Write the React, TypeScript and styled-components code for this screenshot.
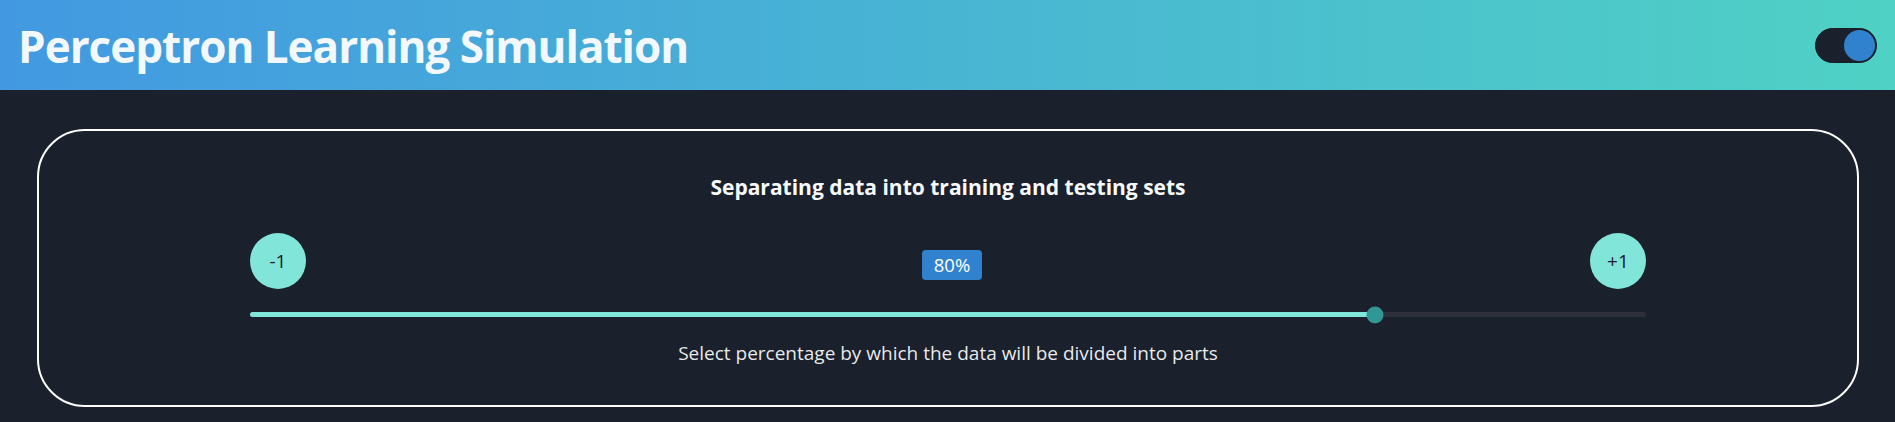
import React, { useState } from "react";
import styled, { createGlobalStyle } from "styled-components";

const GlobalStyle = createGlobalStyle`
  body {
    margin: 0;
    background-color: #1a202c;
    font-family: "Open Sans", "Noto Sans", sans-serif;
    color: rgba(255, 255, 255, 0.92);
  }
`;

const Header = styled.header`
  height: 90px;
  display: flex;
  align-items: center;
  justify-content: space-between;
  padding: 0 18px 0 18px;
  background: linear-gradient(to right, #4299e1, #4fd1c5);
`;
const Title = styled.h1`
  margin: 2px 0 0;
  font-size: 44px;
  font-weight: 700;
  letter-spacing: -1px;
  color: #f3f8fc;
  line-height: 1.2;
`;
const Switch = styled.button<{ $on: boolean }>`
  width: 62px;
  height: 35px;
  border-radius: 18px;
  border: 1px solid #171c26;
  background-color: #1a202c;
  padding: 1px;
  display: flex;
  justify-content: ${(p) => (p.$on ? "flex-end" : "flex-start")};
  align-items: center;
  cursor: pointer;
  span {
    width: 31px;
    height: 31px;
    border-radius: 50%;
    background-color: #3182ce;
  }
`;

const Card = styled.section`
  margin: 39px 36px 0 37px;
  height: 274px;
  border: 2px solid #ffffff;
  border-radius: 48px;
  padding: 0 211px;
  display: flex;
  flex-direction: column;
  align-items: stretch;
`;
const CardTitle = styled.h2`
  margin: 43px 0 0;
  text-align: center;
  font-size: 21px;
  font-weight: 700;
  line-height: 26px;
  color: #f7fafc;
`;
const Controls = styled.div`
  display: flex;
  align-items: center;
  justify-content: space-between;
  margin-top: 33px;
`;
const StepButton = styled.button`
  width: 56px;
  height: 56px;
  border-radius: 50%;
  border: none;
  background-color: #81e6d9;
  color: #1a202c;
  font-family: inherit;
  font-size: 19px;
  cursor: pointer;
`;
const ValueLabel = styled.div`
  margin: 7px 0 0 8px;
  padding: 0 12px;
  height: 30px;
  line-height: 30px;
  border-radius: 4px;
  background-color: #3182ce;
  color: #ffffff;
  font-size: 18.5px;
`;
const Track = styled.div`
  position: relative;
  margin-top: 23px;
  height: 5px;
  border-radius: 3px;
  background-color: #2d303b;
`;
const Filled = styled.div`
  height: 100%;
  border-radius: 3px;
  background-color: #81e6d9;
`;
const Thumb = styled.div`
  position: absolute;
  top: 50%;
  width: 17px;
  height: 17px;
  border-radius: 50%;
  background-color: #319795;
  transform: translate(-50%, -50%);
`;
const Hint = styled.p`
  margin: 23px 0 0;
  text-align: center;
  font-size: 19px;
`;

const App = () => {
  const [value, setValue] = useState(80);
  const [dark, setDark] = useState(true);
  const pos = `calc(${value}% + 8px)`;

  return (
    <>
      <GlobalStyle />
      <Header>
        <Title>Perceptron Learning Simulation</Title>
        <Switch $on={dark} onClick={() => setDark(!dark)}>
          <span />
        </Switch>
      </Header>
      <Card>
        <CardTitle>Separating data into training and testing sets</CardTitle>
        <Controls>
          <StepButton onClick={() => setValue(Math.max(0, value - 1))}>-1</StepButton>
          <ValueLabel>{value}%</ValueLabel>
          <StepButton onClick={() => setValue(Math.min(100, value + 1))}>+1</StepButton>
        </Controls>
        <Track>
          <Filled style={{ width: pos }} />
          <Thumb style={{ left: pos }} />
        </Track>
        <Hint>Select percentage by which the data will be divided into parts</Hint>
      </Card>
    </>
  );
};

export default App;
